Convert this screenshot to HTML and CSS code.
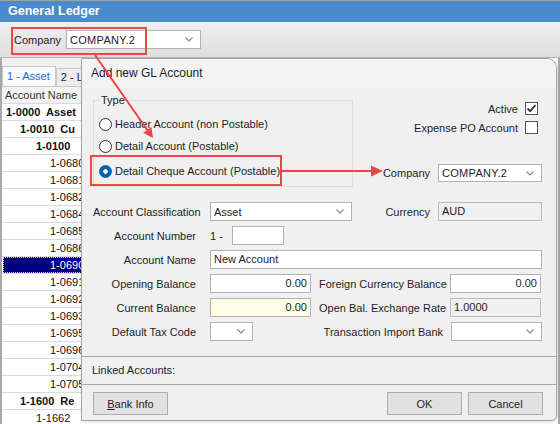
FILE: index.html
```html
<!DOCTYPE html>
<html>
<head>
    <meta charset="utf-8" />
    <title>General Ledger</title>
    <link rel="stylesheet" href="styles.css">
</head>
<body>

<div class="app">
    <div class="titlebar">General Ledger</div>
    <div class="toolbar">
        <span class="toolbar-label">Company</span>
        <div class="combo company-top">
            <span>COMPANY.2</span>
            <svg class="chev" width="8" height="5" viewBox="0 0 8 5"><path d="M0.5 0.5 L4 4 L7.5 0.5" fill="none" stroke="#888" stroke-width="1.2"/></svg>
        </div>
    </div>

    <div class="ledger">
        <div class="ledger-clip">
            <div class="tabs">
                <div class="tab active">1 - Asset</div>
                <div class="tab">2 - Li</div>
            </div>
            <div class="grid">
                <div class="grid-head">Account Name</div>
                <div class="row bold lv0">1-0000  Asset</div>
                <div class="row bold lv1">1-0010  Cu</div>
                <div class="row bold lv2">1-0100</div>
                <div class="row lv3">1-0680</div>
                <div class="row lv3">1-0681</div>
                <div class="row lv3">1-0682</div>
                <div class="row lv3">1-0684</div>
                <div class="row lv3">1-0685</div>
                <div class="row lv3">1-0686</div>
                <div class="row lv3 selected"><span>1-0690</span></div>
                <div class="row lv3">1-0691</div>
                <div class="row lv3">1-0692</div>
                <div class="row lv3">1-0693</div>
                <div class="row lv3">1-0695</div>
                <div class="row lv3">1-0696</div>
                <div class="row lv3">1-0704</div>
                <div class="row lv3">1-0705</div>
                <div class="row bold lv1">1-1600  Re</div>
                <div class="row lv2">1-1662</div>
            </div>
        </div>
    </div>

    <div class="dialog">
        <div class="dlg-title">Add new GL Account</div>
        <div class="dlg-body">
            <div class="dlg-top">
                <div class="group">
                    <span class="group-title">Type</span>
                    <label class="radio-row"><span class="radio"></span>Header Account (non Postable)</label>
                    <label class="radio-row"><span class="radio"></span>Detail Account (Postable)</label>
                    <label class="radio-row cheque"><span class="radio on"></span>Detail Cheque Account (Postable)</label>
                </div>
                <div class="flags">
                    <div class="flag-row">Active <span class="check"><svg width="11" height="11" viewBox="0 0 11 11"><path d="M1.5 5.5 L4.2 8.2 L9.5 2" fill="none" stroke="#333" stroke-width="1.8"/></svg></span></div>
                    <div class="flag-row second">Expense PO Account <span class="check"></span></div>
                    <div class="company-row">
                        <span>Company</span>
                        <div class="combo company-dlg">
                            <span>COMPANY.2</span>
                            <svg class="chev" width="8" height="5" viewBox="0 0 8 5"><path d="M0.5 0.5 L4 4 L7.5 0.5" fill="none" stroke="#888" stroke-width="1.2"/></svg>
                        </div>
                    </div>
                </div>
            </div>

            <div class="form">
                <div class="form-row">
                    <span class="lbl">Account Classification</span>
                    <div class="combo w-class">
                        <span>Asset</span>
                        <svg class="chev" width="8" height="5" viewBox="0 0 8 5"><path d="M0.5 0.5 L4 4 L7.5 0.5" fill="none" stroke="#888" stroke-width="1.2"/></svg>
                    </div>
                    <div class="aside">
                        <span>Currency</span>
                        <div class="box readonly w-cur">AUD</div>
                    </div>
                </div>
                <div class="form-row">
                    <span class="lbl">Account Number</span>
                    <span class="prefix">1 -</span>
                    <div class="box w-num"></div>
                </div>
                <div class="form-row">
                    <span class="lbl">Account Name</span>
                    <div class="box grow">New Account</div>
                </div>
                <div class="form-row">
                    <span class="lbl">Opening Balance</span>
                    <div class="box num w-bal">0.00</div>
                    <span class="lbl2">Foreign Currency Balance</span>
                    <div class="box num w-right">0.00</div>
                </div>
                <div class="form-row">
                    <span class="lbl">Current Balance</span>
                    <div class="box num w-bal current">0.00</div>
                    <span class="lbl2">Open Bal. Exchange Rate</span>
                    <div class="box readonly w-right">1.0000</div>
                </div>
                <div class="form-row">
                    <span class="lbl">Default Tax Code</span>
                    <div class="combo w-tax">
                        <span></span>
                        <svg class="chev" width="8" height="5" viewBox="0 0 8 5"><path d="M0.5 0.5 L4 4 L7.5 0.5" fill="none" stroke="#888" stroke-width="1.2"/></svg>
                    </div>
                    <span class="lbl2 push">Transaction Import Bank</span>
                    <div class="combo w-right">
                        <span></span>
                        <svg class="chev" width="8" height="5" viewBox="0 0 8 5"><path d="M0.5 0.5 L4 4 L7.5 0.5" fill="none" stroke="#888" stroke-width="1.2"/></svg>
                    </div>
                </div>
            </div>
        </div>
        <div class="dlg-linked">Linked Accounts:</div>
        <div class="dlg-buttons">
            <button class="btn"><u>B</u>ank Info</button>
            <button class="btn ok">OK</button>
            <button class="btn">Cancel</button>
        </div>
    </div>

    <!-- callouts drawn over the screenshot -->
    <svg class="callouts" width="560" height="424" viewBox="0 0 560 424">
        <rect x="12" y="28" width="134" height="26" fill="none" stroke="#ec4646" stroke-width="2"/>
        <rect x="91" y="156" width="190" height="29" fill="none" stroke="#ec4646" stroke-width="2"/>
        <line x1="95" y1="55" x2="148" y2="131" stroke="#ec4646" stroke-width="2"/>
        <polygon points="153,138 143.2,132.7 151.4,126.9" fill="#ec4646"/>
        <line x1="282" y1="171" x2="373" y2="171" stroke="#ec4646" stroke-width="2"/>
        <polygon points="383,171 371,165.5 371,176.5" fill="#ec4646"/>
    </svg>
</div>

</body>
</html>
```

FILE: styles.css
```css
body, html {
    margin: 0;
    padding: 0;
    width: 100%;
    height: 100%;
    overflow: hidden;
    font-family: "Liberation Sans", Arial, sans-serif;
    font-size: 11px;
    color: #1e1e1e;
}
.app {
    position: relative;
    width: 560px;
    height: 424px;
    background: #fff;
    overflow: hidden;
}
.titlebar {
    height: 21px;
    border-top: 1px solid #a0a0a0;
    background: #4a8ccb;
    color: #fff;
    font-weight: bold;
    font-size: 12.5px;
    line-height: 21px;
    padding-left: 8px;
}
.toolbar {
    height: 35px;
    border-bottom: 1px solid #b4b4b4;
    background: linear-gradient(#f0f0f0, #dedede);
    display: flex;
    align-items: center;
    padding-left: 14px;
}
.toolbar-label {
    width: 52px;
}
.combo {
    box-sizing: border-box;
    height: 19px;
    background: #fff;
    border: 1px solid #b2b2b2;
    display: flex;
    align-items: center;
    justify-content: space-between;
    padding: 0 7px 0 3px;
}
.combo .chev {
    flex: none;
}
.company-top {
    width: 135px;
    letter-spacing: 0.3px;
}
.ledger {
    border-left: 2px solid #a8a8a8;
    border-right: 2px solid #a8a8a8;
    height: 366px;
    background: #fff;
}
.ledger-clip {
    width: 80px;
    height: 100%;
    overflow: hidden;
    background: #f0f0f0;
}
.tabs {
    display: flex;
    padding-top: 8px;
    height: 20px;
    align-items: flex-end;
}
.tab {
    box-sizing: border-box;
    height: 18px;
    line-height: 17px;
    padding: 0 5px 0 4px;
    border: 1px solid #c8c8c8;
    border-bottom: none;
    background: #ececec;
    white-space: nowrap;
}
.tab.active {
    height: 20px;
    line-height: 19px;
    background: #fafafa;
    color: #1c6fc4;
}
.grid {
    background: #fff;
    border-top: 1px solid #c8c8c8;
}
.grid-head {
    height: 16px;
    line-height: 16px;
    padding-left: 3px;
    background: #f3f3f3;
    border-bottom: 1px solid #dadada;
    color: #333;
}
.row {
    height: 16px;
    line-height: 16px;
    border-bottom: 1px solid #dadada;
    white-space: pre;
    overflow: hidden;
    color: #111;
}
.row.bold {
    font-weight: bold;
}
.lv0 { padding-left: 4px; }
.lv1 { padding-left: 18px; }
.lv2 { padding-left: 34px; }
.lv3 { padding-left: 48px; }
.row.selected span {
    display: block;
    margin-left: -47px;
    padding-left: 47px;
    background: #000080;
    color: #fff;
    outline: 1px dotted #e8d27a;
    outline-offset: -1px;
}

/* dialog */
.dialog {
    position: absolute;
    left: 81px;
    top: 58px;
    width: 476px;
    height: 363px;
    box-sizing: border-box;
    border: 1px solid #a4a4a4;
    border-radius: 0 10px 6px 0;
    background: #f0f0f0;
    overflow: hidden;
    box-shadow: 1px 1px 3px rgba(0,0,0,0.15);
}
.dlg-title {
    height: 29px;
    line-height: 29px;
    padding-left: 9px;
    font-size: 12px;
    background: #f3f3f3;
}
.dlg-body {
    padding: 0 14px 15px 11px;
}
.dlg-top {
    display: flex;
    align-items: flex-start;
}
.group {
    position: relative;
    box-sizing: border-box;
    width: 260px;
    height: 87px;
    margin-top: 12px;
    border: 1px solid #dcdcdc;
    padding: 12px 0 0 5px;
}
.group-title {
    position: absolute;
    top: -7px;
    left: 6px;
    line-height: 13px;
    background: #f0f0f0;
    padding: 0 1px;
}
.radio-row {
    display: flex;
    align-items: center;
    height: 22px;
    gap: 3px;
}
.radio-row.cheque {
    margin-top: 3px;
}
.radio {
    box-sizing: border-box;
    width: 13px;
    height: 13px;
    border-radius: 50%;
    border: 1px solid #333;
    background: #fff;
}
.radio.on {
    border-color: #0063b1;
    background: radial-gradient(circle, #fff 0 2px, #0063b1 2.5px);
}
.flags {
    flex: 1;
    display: flex;
    flex-direction: column;
    align-items: flex-end;
    padding-top: 14px;
}
.flag-row {
    display: flex;
    align-items: center;
    gap: 7px;
    height: 13px;
    padding-right: 4px;
}
.flag-row.second {
    margin-top: 6px;
}
.check {
    box-sizing: border-box;
    width: 13px;
    height: 13px;
    border: 1px solid #555;
    background: #fff;
    display: flex;
    align-items: center;
    justify-content: center;
}
.company-row {
    display: flex;
    align-items: center;
    gap: 8px;
    margin-top: 30px;
}
.company-dlg {
    width: 104px;
    height: 18px;
    letter-spacing: 0.3px;
}
.form {
    margin-top: 15px;
}
.form-row {
    display: flex;
    align-items: center;
    height: 19px;
    margin-bottom: 5px;
}
.form-row:last-child {
    margin-bottom: 0;
}
.lbl {
    width: 103px;
    margin-right: 14px;
    text-align: right;
    white-space: nowrap;
}
.lbl2 {
    width: 123px;
    margin: 0 8px;
    text-align: right;
    white-space: nowrap;
}
.lbl2.push {
    margin-left: auto;
}
.box {
    box-sizing: border-box;
    height: 19px;
    line-height: 17px;
    padding: 0 3px;
    background: #fff;
    border: 1px solid #b2b2b2;
    white-space: nowrap;
}
.box.readonly {
    background: #f0f0f0;
    border-color: #bcbcbc;
}
.box.num {
    text-align: right;
}
.box.current {
    background: #fffde6;
}
.aside {
    margin-left: auto;
    display: flex;
    align-items: center;
    gap: 8px;
}
.prefix {
    width: 22px;
}
.w-class { width: 142px; }
.w-cur { width: 104px; }
.w-num { width: 52px; }
.w-bal { width: 101px; }
.w-right { width: 91px; }
.w-tax { width: 43px; }
.grow { flex: 1; }
.dlg-linked {
    height: 27px;
    line-height: 27px;
    padding-left: 10px;
    border-top: 1px solid #a8a8a8;
    border-bottom: 1px solid #a8a8a8;
}
.dlg-buttons {
    display: flex;
    gap: 6px;
    padding: 7px 13px 0 11px;
}
.btn {
    box-sizing: border-box;
    width: 75px;
    height: 23px;
    font-family: inherit;
    font-size: 11px;
    color: #1e1e1e;
    background: #e1e1e1;
    border: 1px solid #adadad;
    padding: 0;
}
.btn.ok {
    margin-left: auto;
}
.callouts {
    position: absolute;
    left: 0;
    top: 0;
    pointer-events: none;
}
```
